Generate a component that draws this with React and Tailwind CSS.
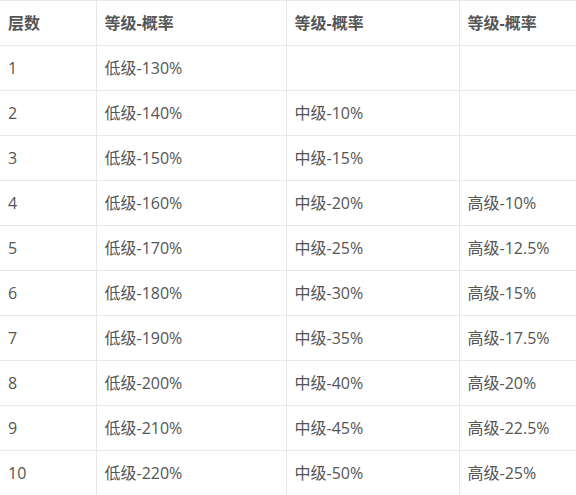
import React from "react";

const rows = [
  ["1", "低级-130%", "", ""],
  ["2", "低级-140%", "中级-10%", ""],
  ["3", "低级-150%", "中级-15%", ""],
  ["4", "低级-160%", "中级-20%", "高级-10%"],
  ["5", "低级-170%", "中级-25%", "高级-12.5%"],
  ["6", "低级-180%", "中级-30%", "高级-15%"],
  ["7", "低级-190%", "中级-35%", "高级-17.5%"],
  ["8", "低级-200%", "中级-40%", "高级-20%"],
  ["9", "低级-210%", "中级-45%", "高级-22.5%"],
  ["10", "低级-220%", "中级-50%", "高级-25%"],
];

const App = () => {
  return (
    <div className="w-[576px] h-[495px] overflow-hidden bg-white font-['Open_Sans','Noto_Sans_CJK_SC',sans-serif] text-[16px] text-[#555]">
      <table className="w-[576px] table-fixed border-collapse">
        <colgroup>
          <col className="w-[96px]" />
          <col className="w-[190px]" />
          <col className="w-[173px]" />
          <col className="w-[117px]" />
        </colgroup>
        <thead>
          <tr className="h-[45px] border-t border-[#e8e8e8]">
            {["层数", "等级-概率", "等级-概率", "等级-概率"].map((h, i) => (
              <th
                key={i}
                className="px-2 text-left font-bold border-l first:border-l-0 border-[#e8e8e8]"
              >
                {h}
              </th>
            ))}
          </tr>
        </thead>
        <tbody>
          {rows.map((r) => (
            <tr key={r[0]} className="h-[45px] border-t border-[#e8e8e8]">
              {r.map((c, i) => (
                <td
                  key={i}
                  className="px-2 border-l first:border-l-0 border-[#e8e8e8]"
                >
                  {c}
                </td>
              ))}
            </tr>
          ))}
        </tbody>
      </table>
    </div>
  );
};

export default App;
